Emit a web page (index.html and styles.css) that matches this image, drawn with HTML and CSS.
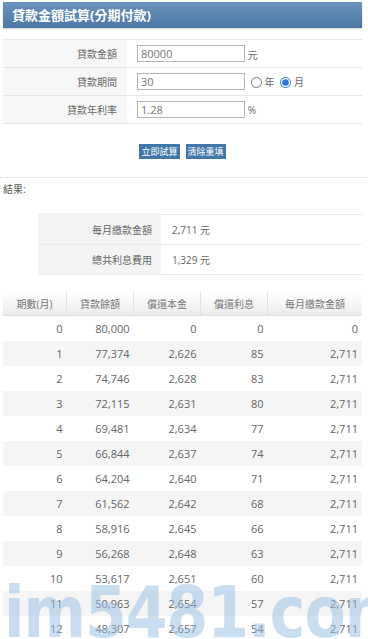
FILE: index.html
```html
<!DOCTYPE html>
<html lang="zh-Hant">
<head>
  <meta charset="UTF-8" />
  <meta name="viewport" content="width=device-width, initial-scale=1.0"/>
  <title>貸款金額試算(分期付款)</title>
  <link rel="stylesheet" href="styles.css">
</head>
<body>
  <div class="page">
    <h1 class="title">貸款金額試算(分期付款)</h1>

    <table class="form">
      <tr>
        <th>貸款金額</th>
        <td><input class="field" type="text" value="80000"> <span class="unit">元</span></td>
      </tr>
      <tr>
        <th>貸款期間</th>
        <td>
          <input class="field" type="text" value="30">
          <label class="opt"><input type="radio" name="period"> 年</label>
          <label class="opt"><input type="radio" name="period" checked> 月</label>
        </td>
      </tr>
      <tr>
        <th>貸款年利率</th>
        <td><input class="field" type="text" value="1.28"> <span class="unit">%</span></td>
      </tr>
    </table>

    <div class="actions">
      <button class="btn">立即試算</button>
      <button class="btn">清除重填</button>
    </div>
  </div>

  <hr class="dots">

  <div class="page">
    <p class="result-label">結果:</p>

    <table class="summary">
      <tr>
        <th>每月繳款金額</th>
        <td>2,711 元</td>
      </tr>
      <tr>
        <th>總共利息費用</th>
        <td>1,329 元</td>
      </tr>
    </table>

    <table class="schedule">
      <thead>
        <tr>
          <th class="c1">期數(月)</th>
          <th class="c2">貸款餘額</th>
          <th class="c3">償還本金</th>
          <th class="c4">償還利息</th>
          <th class="c5">每月繳款金額</th>
        </tr>
      </thead>
      <tbody>
        <tr><td>0</td><td>80,000</td><td>0</td><td>0</td><td>0</td></tr>
        <tr><td>1</td><td>77,374</td><td>2,626</td><td>85</td><td>2,711</td></tr>
        <tr><td>2</td><td>74,746</td><td>2,628</td><td>83</td><td>2,711</td></tr>
        <tr><td>3</td><td>72,115</td><td>2,631</td><td>80</td><td>2,711</td></tr>
        <tr><td>4</td><td>69,481</td><td>2,634</td><td>77</td><td>2,711</td></tr>
        <tr><td>5</td><td>66,844</td><td>2,637</td><td>74</td><td>2,711</td></tr>
        <tr><td>6</td><td>64,204</td><td>2,640</td><td>71</td><td>2,711</td></tr>
        <tr><td>7</td><td>61,562</td><td>2,642</td><td>68</td><td>2,711</td></tr>
        <tr><td>8</td><td>58,916</td><td>2,645</td><td>66</td><td>2,711</td></tr>
        <tr><td>9</td><td>56,268</td><td>2,648</td><td>63</td><td>2,711</td></tr>
        <tr><td>10</td><td>53,617</td><td>2,651</td><td>60</td><td>2,711</td></tr>
        <tr><td>11</td><td>50,963</td><td>2,654</td><td>57</td><td>2,711</td></tr>
        <tr><td>12</td><td>48,307</td><td>2,657</td><td>54</td><td>2,711</td></tr>
      </tbody>
    </table>
  </div>

  <div class="watermark">im5481.com</div>
</body>
</html>
```

FILE: styles.css
```css
body {
  margin: 0;
  background: #fff;
  color: #666;
  font-family: "Open Sans", "Noto Sans CJK TC", sans-serif;
  font-size: 11px;
  position: relative;
  overflow: hidden;
}

.page {
  width: 359px;
  margin-left: 3px;
}

.title {
  margin: 2px 0 0;
  height: 26px;
  line-height: 26px;
  padding-left: 9px;
  font-size: 13px;
  font-weight: bold;
  color: #fff;
  background: linear-gradient(#6b94bd, #4b77a3);
  box-shadow: 0 1px 2px rgba(0, 0, 0, 0.2);
}

table {
  border-collapse: collapse;
  width: 100%;
}

.form {
  margin-top: 11px;
}

.form th,
.form td {
  height: 27px;
  border-top: 1px solid #e6e6e6;
  border-bottom: 1px solid #e6e6e6;
  padding: 0;
}

.form th {
  width: 114px;
  padding-right: 10px;
  text-align: right;
  font-weight: normal;
  font-size: 10px;
  color: #666;
  background: #f7f7f7;
}

.form td {
  padding-left: 10px;
}

.field {
  box-sizing: border-box;
  width: 108px;
  height: 17px;
  border: 1px solid #b5b5b5;
  padding: 0 3px;
  font-family: "Open Sans", sans-serif;
  font-size: 11px;
  color: #777;
  vertical-align: middle;
}

.unit,
.opt {
  font-size: 10px;
  color: #666;
  vertical-align: middle;
}

.opt input {
  width: 11px;
  height: 11px;
  margin: 0 0 0 3px;
  vertical-align: -2px;
  accent-color: #2d78d6;
}

.actions {
  display: flex;
  justify-content: center;
  gap: 6px;
  margin-top: 20px;
}

.btn {
  height: 15px;
  padding: 0 2px;
  border: none;
  background: #3f78a8;
  color: #fff;
  font-family: "Noto Sans CJK TC", sans-serif;
  font-size: 9px;
  line-height: 15px;
}

.dots {
  margin: 18px 0 0;
  border: none;
  border-top: 1px dotted #d6d6d6;
}

.result-label {
  margin: 3px 0 0;
  font-size: 10px;
  color: #555;
}

.summary {
  width: 324px;
  margin: 18px 0 0 35px;
}

.summary th,
.summary td {
  height: 29px;
  border-top: 1px solid #eaeaea;
  border-bottom: 1px solid #eaeaea;
  padding: 0;
}

.summary th {
  width: 114px;
  padding-right: 9px;
  text-align: right;
  font-weight: normal;
  font-size: 10px;
  background: #f4f4f4;
}

.summary td {
  padding-left: 11px;
  font-size: 10px;
}

.schedule {
  margin-top: 17px;
}

.schedule th {
  height: 23px;
  padding: 0;
  font-weight: normal;
  font-size: 10px;
  color: #777;
  background: linear-gradient(#fff, #ececec);
  border-left: 1px solid #e2e2e2;
  border-bottom: 1px solid #e0e0e0;
}

.schedule th:first-child {
  border-left: none;
}

.schedule .c1 { width: 63px; }
.schedule .c2 { width: 66px; }
.schedule .c3 { width: 66px; }
.schedule .c4 { width: 66px; }

.schedule td {
  height: 25px;
  padding: 0 4px 0 0;
  text-align: right;
  font-size: 11px;
  color: #666;
}

.schedule tbody tr:nth-child(even) td {
  background: #f5f5f5;
}

.watermark {
  position: absolute;
  left: 0;
  right: 0;
  top: 586px;
  height: 60px;
  padding-left: 4px;
  overflow: hidden;
  font-family: "DejaVu Sans", sans-serif;
  font-weight: bold;
  font-size: 60px;
  line-height: 60px;
  letter-spacing: -1px;
  color: rgba(150, 190, 228, 0.5);
  white-space: nowrap;
  transform: scaleY(1.2);
  transform-origin: 0 51px;
  pointer-events: none;
}
```
